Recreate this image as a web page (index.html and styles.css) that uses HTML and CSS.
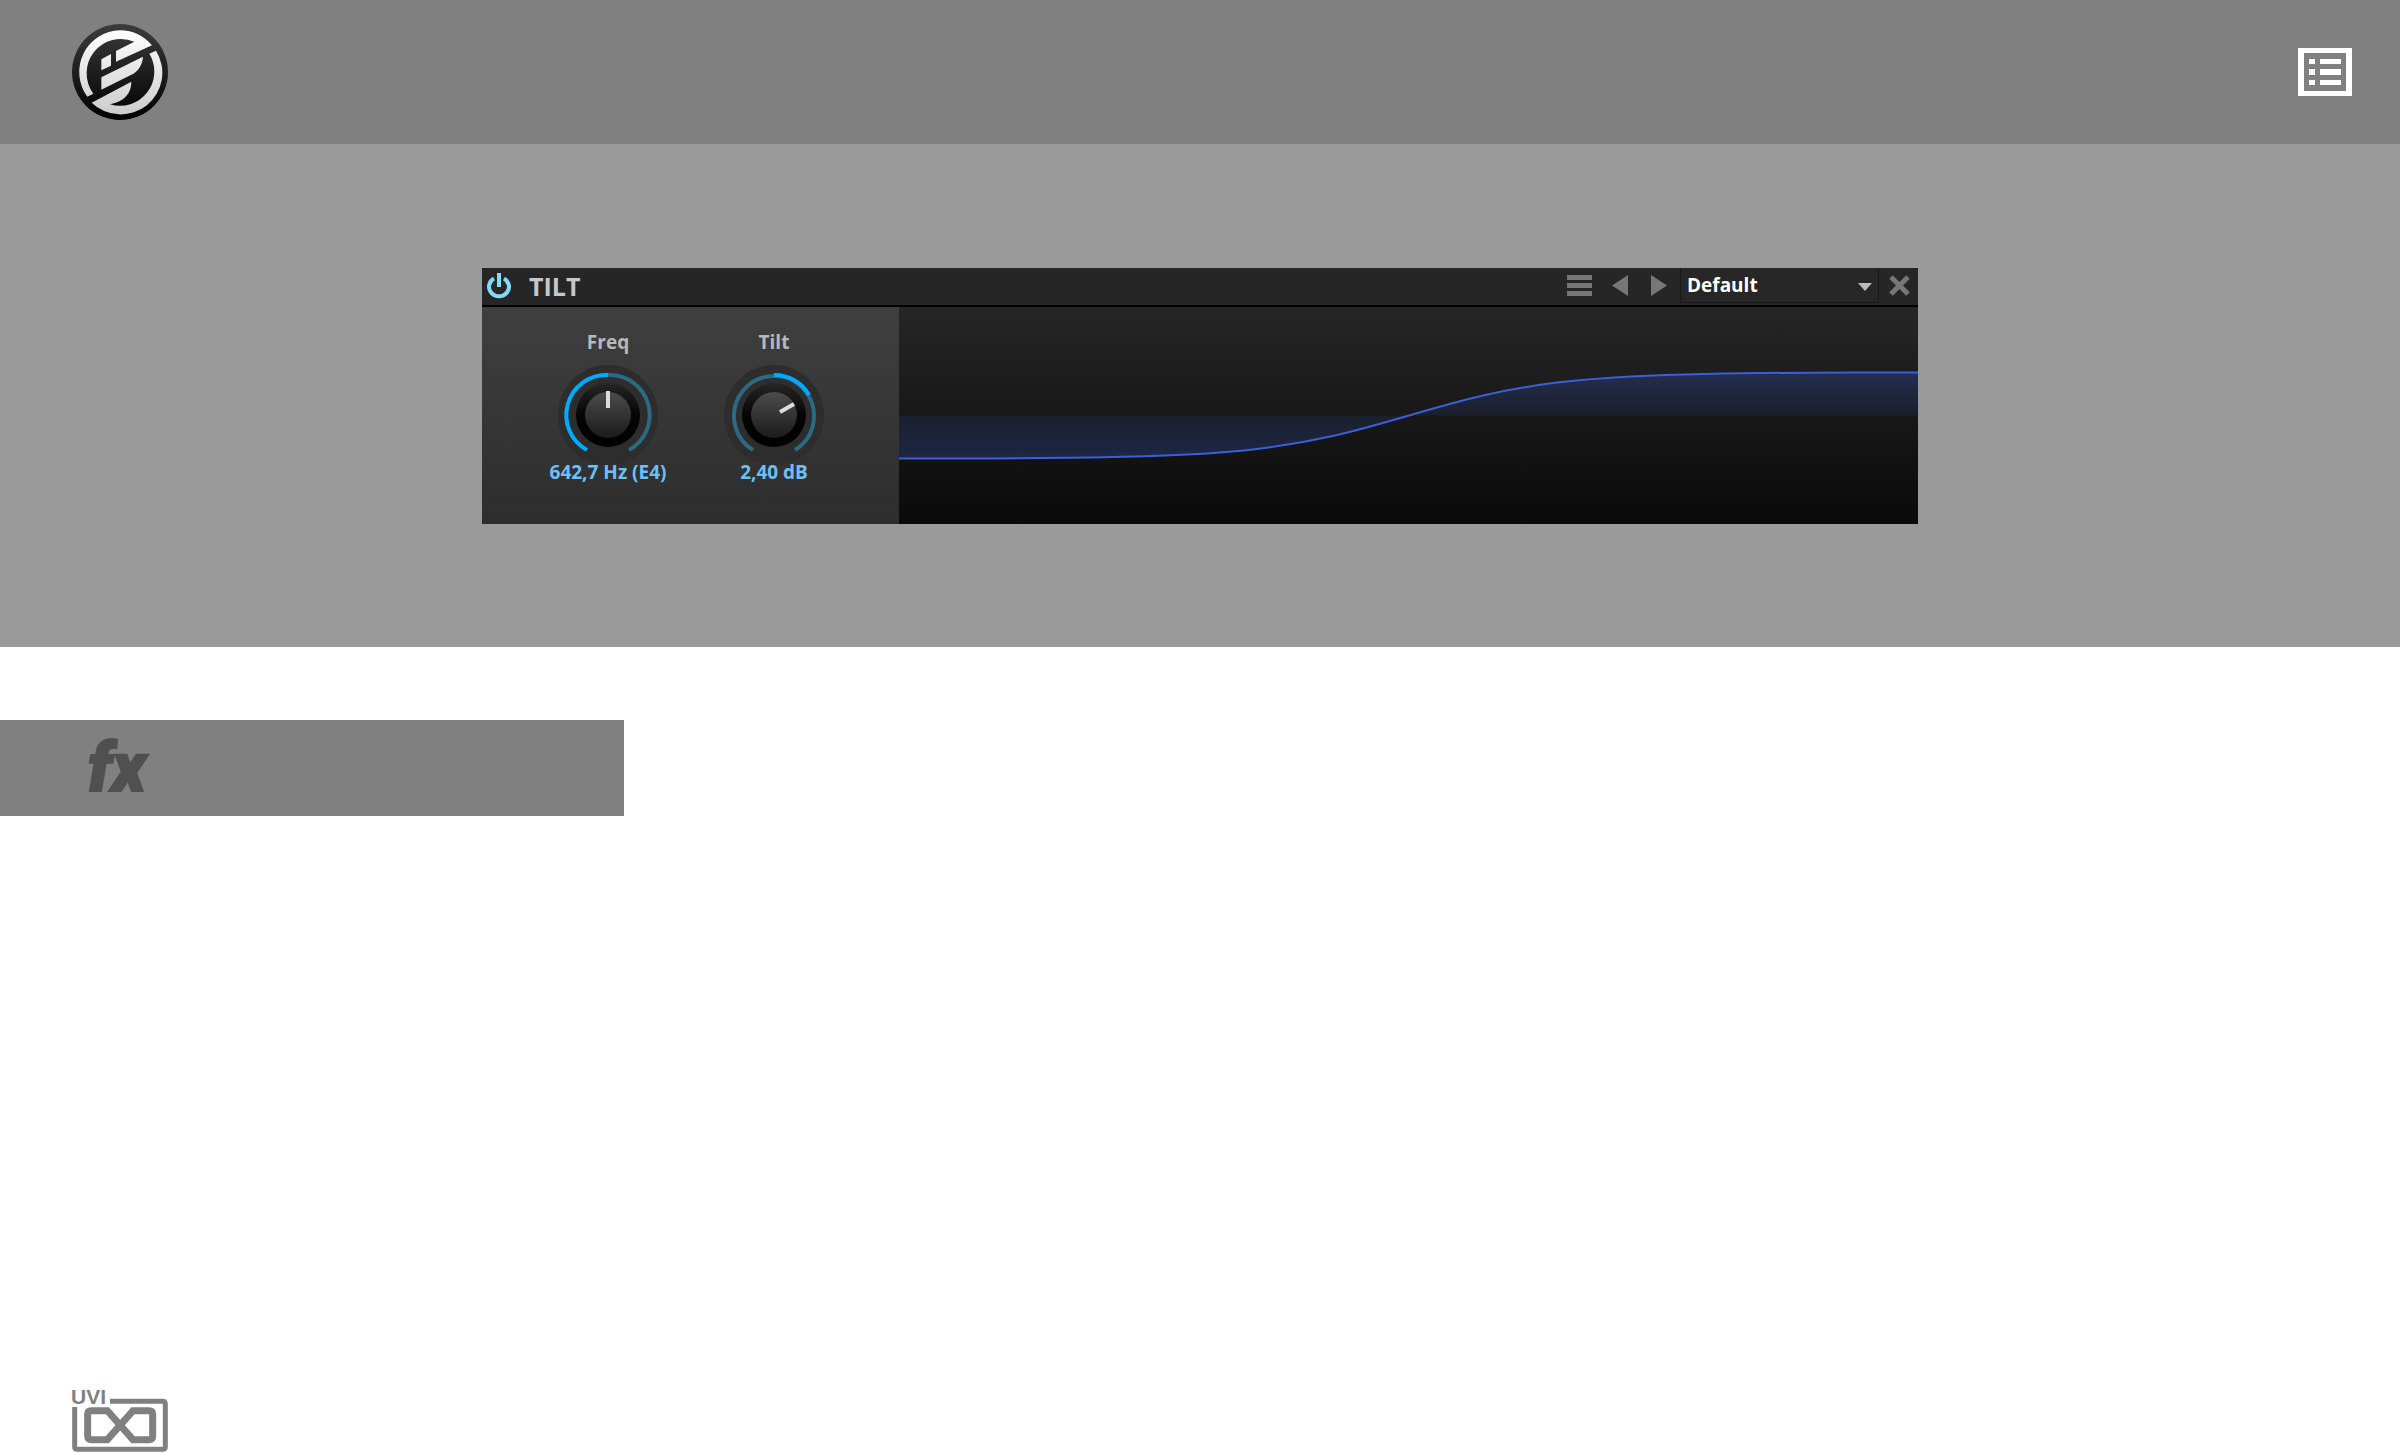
FILE: index.html
```html
<!DOCTYPE html>
<html lang="en">
<head>
<meta charset="utf-8">
<title>Tilt</title>
<link rel="stylesheet" href="styles.css">
</head>
<body>
<header class="topbar">
  <a class="brand" href="#" aria-label="Home">
    <svg width="96" height="96" viewBox="36 27 288 288">
      <defs>
        <linearGradient id="disc" x1="0" y1="0" x2="0" y2="1"><stop offset="0" stop-color="#3c3c3c"/><stop offset="1" stop-color="#000"/></linearGradient>
        <linearGradient id="mark" gradientUnits="userSpaceOnUse" x1="0" y1="46" x2="0" y2="296"><stop offset="0" stop-color="#fff"/><stop offset="1" stop-color="#ccc"/></linearGradient>
      </defs>
      <circle cx="180" cy="171" r="144" fill="url(#disc)"/>
      <g fill="url(#mark)">
        <path d="M82 245A125 125 0 0 1 180 46C219 46 253 63 276 91L168 140V108L223 80A103 103 0 0 0 100 236Z"/>
        <path d="M288 107A125 125 0 0 1 95 263L214 200C214 235 194 259 150 268A103 103 0 0 0 268 116Z"/>
        <path d="M124 187L249 125C247 151 234 170 211 181L124 224Z"/>
        <path d="M124 133L153 117V152L124 166Z"/>
      </g>
    </svg>
  </a>
  <button class="icon-button" type="button" aria-label="Contents">
    <svg width="54" height="48" viewBox="0 0 54 48">
      <path fill="#fff" fill-rule="evenodd" d="M0 0H54V48H0ZM6 5V43H48V5Z"/>
      <path fill="#fff" d="M11 11h6v5h-6zM22 11h21v5H22zM11 21h6v6h-6zM22 21h21v6H22zM11 32h6v5h-6zM22 32h21v5H22z"/>
    </svg>
  </button>
</header>

<main>
  <section class="hero">
    <div class="device">
      <div class="device-bar">
        <button class="icon-button" type="button" aria-label="Power">
          <svg width="24" height="26" viewBox="0 0 24 26" fill="none" stroke="#84daf4">
            <path stroke-width="4" d="M7 5.600A10 9.500 0 1 0 17 5.600"/>
            <path stroke-width="4" d="M12 0V14"/>
          </svg>
        </button>
        <h1 class="device-name">TILT</h1>
        <button class="icon-button menu" type="button" aria-label="Menu">
          <svg width="25" height="21" viewBox="0 0 25 21"><path fill="#777" d="M0 0H25V5H0ZM0 8H25V13H0ZM0 16H25V21H0Z"/></svg>
        </button>
        <button class="icon-button previous" type="button" aria-label="Previous preset">
          <svg width="16" height="21" viewBox="0 0 16 21"><path fill="#777" d="M16 0V21L0 10.500Z"/></svg>
        </button>
        <button class="icon-button next" type="button" aria-label="Next preset">
          <svg width="16" height="21" viewBox="0 0 16 21"><path fill="#777" d="M0 0V21L16 10.500Z"/></svg>
        </button>
        <div class="preset">
          <select class="preset-select" aria-label="Preset"><option>Default</option></select>
          <svg class="preset-arrow" width="14" height="8" viewBox="0 0 14 8"><path fill="#bbb" d="M0 0H14L7 8Z"/></svg>
        </div>
        <button class="icon-button close" type="button" aria-label="Close">
          <svg width="21" height="21" viewBox="0 0 21 21"><path stroke="#777" stroke-width="5" d="M2 2L19 19M19 2L2 19"/></svg>
        </button>
      </div>
      <div class="device-body">
        <div class="knobs">
          <div class="knob">
            <label for="freq">Freq</label>
            <div class="dial">
              <svg width="100" height="100" viewBox="-50 -50 100 100" fill="none">
                <defs>
                  <linearGradient id="cap" x1="0" y1="0" x2="0" y2="1"><stop offset="0" stop-color="#4c4c4c"/><stop offset="1" stop-color="#1b1b1b"/></linearGradient>
                  <linearGradient id="rim" x1="0" y1="0" x2="0" y2="1"><stop offset="0" stop-color="#262626"/><stop offset=".5" stop-color="#050505"/><stop offset="1" stop-color="#000"/></linearGradient>
                </defs>
                <circle r="50" fill="#2d2d2d"/>
                <path stroke="#2c6983" stroke-width="4" d="M0 -40A40 40 0 0 1 21 35"/>
                <path stroke="#00aaff" stroke-width="4" d="M-21 35A40 40 0 0 1 0 -40"/>
                <circle r="32" fill="url(#rim)"/>
                <circle r="23" fill="url(#cap)"/>
                <path stroke="#ddd" stroke-width="4" d="M0 -24V-7"/>
              </svg>
              <input id="freq" class="dial-input" type="range" min="0" max="100" value="50">
            </div>
            <output for="freq">642,7 Hz (E4)</output>
          </div>
          <div class="knob">
            <label for="tilt">Tilt</label>
            <div class="dial">
              <svg width="100" height="100" viewBox="-50 -50 100 100" fill="none">
                <circle r="50" fill="#2d2d2d"/>
                <path stroke="#2c6983" stroke-width="4" d="M-21 35A40 40 0 1 1 21 35"/>
                <path stroke="#00aaff" stroke-width="4" d="M0 -40A40 40 0 0 1 35 -20"/>
                <circle r="32" fill="url(#rim)"/>
                <circle r="23" fill="url(#cap)"/>
                <path stroke="#ddd" stroke-width="4" d="M6 -3L20 -11"/>
              </svg>
              <input id="tilt" class="dial-input" type="range" min="-6" max="6" step="0.1" value="2.4">
            </div>
            <output for="tilt">2,40 dB</output>
          </div>
        </div>
        <svg class="graph" viewBox="0 0 1019 217" preserveAspectRatio="none" role="img" aria-label="Frequency response">
          <defs>
            <linearGradient id="low" gradientUnits="userSpaceOnUse" x1="0" y1="108" x2="0" y2="152"><stop offset="0" stop-color="#1b1f2b"/><stop offset="1" stop-color="#1d2746"/></linearGradient>
            <linearGradient id="high" gradientUnits="userSpaceOnUse" x1="0" y1="65" x2="0" y2="108"><stop offset="0" stop-color="#242e50"/><stop offset="1" stop-color="#1b1f2b"/></linearGradient>
          </defs>
          <path fill="url(#low)" d="M0 151.500H66C115 151.400 165 151.100 214 150.100C239 149.600 263 148.900 288 147.600C313 146.300 337 144.500 362 141.400C387 138.300 411 134.200 436 128.500C461 122.700 485 115.800 510 108.500H0Z"/>
          <path fill="url(#high)" d="M510 108.500C535 101.200 559 94.300 584 88.500C609 82.800 633 78.700 658 75.600C683 72.500 707 70.700 732 69.400C757 68.100 781 67.400 806 66.900C855 65.900 905 65.600 954 65.500H1019V108.500Z"/>
          <path fill="none" stroke="#3a5fd9" stroke-width="2" d="M0 151.500H66C115 151.400 165 151.100 214 150.100C239 149.600 263 148.900 288 147.600C313 146.300 337 144.500 362 141.400C387 138.300 411 134.200 436 128.500C461 122.700 485 115.800 510 108.500C535 101.200 559 94.300 584 88.500C609 82.800 633 78.700 658 75.600C683 72.500 707 70.700 732 69.400C757 68.100 781 67.400 806 66.900C855 65.900 905 65.600 954 65.500H1019"/>
        </svg>
      </div>
    </div>
  </section>
  <h2 class="section-tag">fx</h2>
</main>

<footer class="footer">
  <a class="maker" href="#" aria-label="UVI">
    <svg class="maker-logo" width="96" height="64" viewBox="0 0 96 64">
      <text class="maker-name" x="-1" y="15">UVI</text>
      <g fill="none" stroke="#808080" transform="translate(-12 -14) scale(.3333)">
        <path stroke-width="15" d="M150 79H308Q316 79 316 87V215Q316 223 308 223H52Q44 223 44 215V96"/>
        <path stroke-width="21" d="M142 107H94Q83 107 83 118V183Q83 194 94 194H142L219 107H267Q278 107 278 118V183Q278 194 267 194H219Z"/>
      </g>
    </svg>
  </a>
</footer>
</body>
</html>
```
FILE: styles.css
```css
* { box-sizing: border-box; }

body {
  display: flex;
  flex-direction: column;
  min-height: 100vh;
  margin: 0;
  background: #fff;
  font-family: "Open Sans", "Noto Sans", sans-serif;
}

svg { display: block; }

.topbar {
  display: flex;
  align-items: center;
  justify-content: space-between;
  padding: 24px 48px 24px 72px;
  background: #808080;
}

.icon-button {
  display: block;
  padding: 0;
  border: 0;
  background: none;
  cursor: pointer;
}

.hero {
  padding: 124px 48px 123px;
  background: #9a9a9a;
}

.device {
  max-width: 1436px;
  margin: 0 auto;
  background: #262626;
}

.device-bar {
  display: flex;
  align-items: center;
  height: 39px;
  padding: 0 8px 2px 5px;
  border-bottom: 2px solid #000;
}

.device-name {
  margin: 0 auto 0 18px;
  color: #c8c8c8;
  font-size: 25px;
  font-weight: 700;
  line-height: 34px;
}

.previous { margin-left: 20px; }
.next { margin-left: 23px; }
.close { margin-left: 10px; }

.preset {
  position: relative;
  width: 199px;
  margin-left: 13px;
}

.preset-select {
  display: block;
  width: 100%;
  height: 35px;
  padding: 0 24px 0 6px;
  border: 1px solid #1a1a1a;
  border-top: 0;
  border-radius: 0;
  appearance: none;
  background: #272727;
  color: #fff;
  font: 700 19px/24px "Open Sans", "Noto Sans", sans-serif;
}

.preset-arrow {
  position: absolute;
  top: 15px;
  right: 7px;
  pointer-events: none;
}

.device-body {
  display: flex;
  height: 217px;
}

.knobs {
  display: grid;
  flex: 0 0 417px;
  grid-template-columns: 166px 166px;
  align-content: start;
  padding: 23px 42px 0 43px;
  background: linear-gradient(#3f3f3f, #2d2d2d);
}

.knob {
  display: flex;
  flex-direction: column;
  align-items: center;
  color: #b8b8b8;
  font-size: 19px;
  font-weight: 700;
  line-height: 24px;
}

.knob label { margin-bottom: 11px; }
.knob output { margin-top: -5px; color: #6cc0f8; }

.dial { position: relative; }

.dial-input {
  position: absolute;
  inset: 0;
  width: 100%;
  height: 100%;
  margin: 0;
  opacity: 0;
  cursor: pointer;
}

.graph {
  flex: 1;
  min-width: 0;
  height: 100%;
  background: linear-gradient(#262626, #0a0a0a);
}

.section-tag {
  width: 26%;
  margin: 73px 0 0;
  padding-left: 88px;
  background: #808080;
  color: #505050;
  font: italic 900 68px/96px Roboto, sans-serif;
  -webkit-text-stroke: 2px #505050;
}

.footer {
  margin-top: auto;
  padding: 0 72px;
}

.maker { display: inline-block; vertical-align: top; }

.maker-logo { overflow: visible; }

.maker-name {
  fill: #808080;
  font: 700 21px "Liberation Sans", Arial, sans-serif;
}
```
